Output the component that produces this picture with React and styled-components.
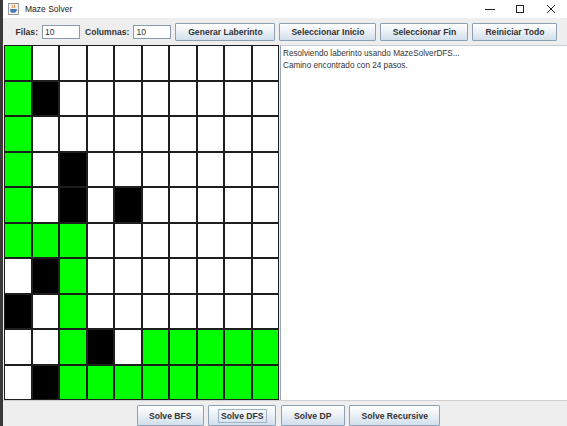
import React from 'react';
import styled, { createGlobalStyle } from 'styled-components';

const GlobalStyle = createGlobalStyle`
  html, body {
    margin: 0;
    padding: 0;
    overflow: hidden;
    background: #eeeeee;
  }
  body {
    font-family: "Liberation Sans", Arial, sans-serif;
  }
`;

const MAZE = [
  'GWWWWWWWWW',
  'GBWWWWWWWW',
  'GWWWWWWWWW',
  'GWBWWWWWWW',
  'GWBWBWWWWW',
  'GGGWWWWWWW',
  'WBGWWWWWWW',
  'BWGWWWWWWW',
  'WWGBWGGGGG',
  'WBGGGGGGGG',
];

const cellColors = { G: '#00ff00', B: '#000000', W: '#ffffff' };

const Window = styled.div`
  width: 564px;
  height: 426px;
  display: flex;
  flex-direction: column;
  border-left: 3px solid #3a3a3a;
  background: #eeeeee;
`;

const TitleBar = styled.div`
  height: 18px;
  display: flex;
  align-items: center;
  background: #ffffff;
  color: #1a1a1a;
  font-size: 8.5px;
`;

const AppIcon = styled.svg`
  margin-left: 5px;
  margin-right: 6px;
  flex: none;
`;

const TitleText = styled.span`
  flex: 1;
`;

const WinControl = styled.div`
  width: ${(p) => p.$w || 30}px;
  height: 18px;
  display: flex;
  align-items: center;
  justify-content: center;
`;

const Toolbar = styled.div`
  height: 27px;
  display: flex;
  align-items: center;
  justify-content: center;
  gap: 4px;
  padding-left: 3px;
  box-sizing: border-box;
`;

const Label = styled.span`
  font-size: 8.6px;
  font-weight: bold;
  color: #333333;
  margin-left: ${(p) => p.$ml || 0}px;
`;

const Field = styled.div`
  width: 38px;
  height: 14px;
  box-sizing: border-box;
  border: 1px solid #8a9bab;
  background: #ffffff;
  font-size: 8.6px;
  color: #333333;
  padding-left: 2px;
  display: flex;
  align-items: center;
`;

const Button = styled.div`
  width: ${(p) => p.$w}px;
  height: ${(p) => p.$h || 18}px;
  box-sizing: border-box;
  border: 1px solid #8ea1b4;
  border-radius: 1px;
  background: linear-gradient(to bottom, #ffffff 0%, #f1f5f9 35%, #dde7f1 75%, #d3dfeb 100%);
  display: flex;
  align-items: center;
  justify-content: center;
  font-size: 8.6px;
  font-weight: bold;
  color: #333333;
  flex: none;
`;

const Focus = styled.span`
  border: 1px solid #9fb2c6;
  padding: 1px 2px;
`;

const Main = styled.div`
  height: 355px;
  display: flex;
  padding-left: 1px;
`;

const Grid = styled.div`
  width: 275px;
  height: 355px;
  display: grid;
  grid-template-columns: repeat(10, 1fr);
  grid-template-rows: repeat(10, 1fr);
  flex: none;
`;

const Cell = styled.div`
  background: ${(p) => cellColors[p.$kind]};
  border: 1px solid #1e1e1e;
`;

const Output = styled.div`
  flex: 1;
  margin-left: 1px;
  background: #ffffff;
  border-left: 1px solid #9aa7b4;
  border-top: 1px solid #c4ccd4;
  padding: 2px 2px;
  font-size: 8.2px;
  line-height: 12px;
  color: #333333;
`;

const BottomBar = styled.div`
  flex: 1;
  display: flex;
  align-items: flex-start;
  justify-content: center;
  gap: 4.5px;
  padding-top: 4px;
  padding-left: 7px;
  border-top: 1px solid #cfcfcf;
  box-sizing: border-box;
`;

const JavaIcon = () => (
  <AppIcon width="11" height="12" viewBox="0 0 11 12">
    <rect x="0.5" y="0.5" width="10" height="11" fill="#f3f3f3" stroke="#9a9a9a" />
    <path d="M4 2 q1.5 1.5 0 3 M6 1.5 q1.5 1.5 0 3.5" stroke="#e07a1f" fill="none" strokeWidth="0.9" />
    <path d="M2.2 6 h6 v1.8 q0 2 -3 2 q-3 0 -3 -2 z" fill="#4a78b5" />
    <path d="M8.2 6.4 q1.6 0.4 0 1.6" stroke="#4a78b5" fill="none" strokeWidth="0.8" />
  </AppIcon>
);

const App = () => {
  return (
    <>
      <GlobalStyle />
      <Window>
        <TitleBar>
          <JavaIcon />
          <TitleText>Maze Solver</TitleText>
          <WinControl>
            <svg width="10" height="10" viewBox="0 0 10 10">
              <path d="M0 5.5 h10" stroke="#222" strokeWidth="1" />
            </svg>
          </WinControl>
          <WinControl>
            <svg width="10" height="10" viewBox="0 0 10 10">
              <rect x="1.5" y="1.5" width="7" height="7" fill="none" stroke="#222" strokeWidth="1" />
            </svg>
          </WinControl>
          <WinControl $w={32}>
            <svg width="10" height="10" viewBox="0 0 10 10">
              <path d="M1 1 L9 9 M9 1 L1 9" stroke="#222" strokeWidth="1" />
            </svg>
          </WinControl>
        </TitleBar>

        <Toolbar>
          <Label>Filas:</Label>
          <Field>10</Field>
          <Label $ml={1}>Columnas:</Label>
          <Field>10</Field>
          <Button $w={100}>Generar Laberinto</Button>
          <Button $w={97}>Seleccionar Inicio</Button>
          <Button $w={88}>Seleccionar Fin</Button>
          <Button $w={85}>Reiniciar Todo</Button>
        </Toolbar>

        <Main>
          <Grid>
            {MAZE.map((row, r) =>
              row.split('').map((k, c) => <Cell key={`${r}-${c}`} $kind={k} />)
            )}
          </Grid>
          <Output>
            <div>Resolviendo laberinto usando MazeSolverDFS...</div>
            <div>Camino encontrado con 24 pasos.</div>
          </Output>
        </Main>

        <BottomBar>
          <Button $w={67} $h={21}>Solve BFS</Button>
          <Button $w={68} $h={21}><Focus>Solve DFS</Focus></Button>
          <Button $w={64} $h={21}>Solve DP</Button>
          <Button $w={91} $h={21}>Solve Recursive</Button>
        </BottomBar>
      </Window>
    </>
  );
};

export default App;
